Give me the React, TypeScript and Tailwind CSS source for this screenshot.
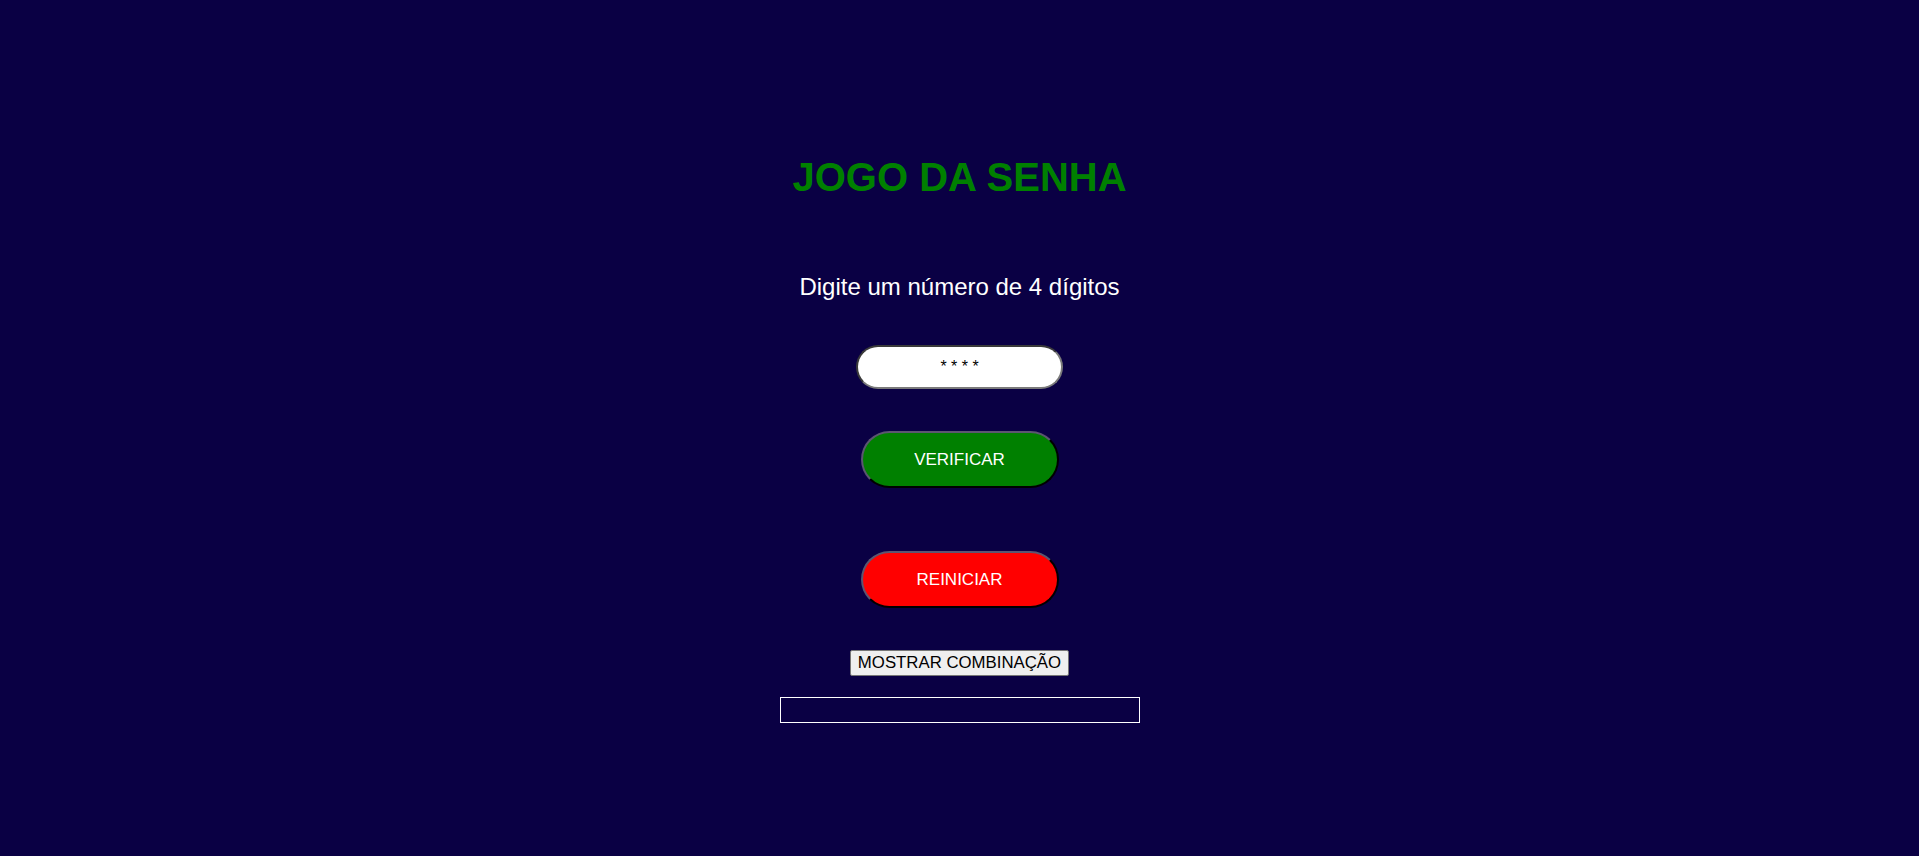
import { useState } from 'react';

export default function App() {
  const [mostrar, setMostrar] = useState(false);

  return (
    <main className="min-h-screen w-full bg-[#0a0044] flex flex-col items-center pt-[154px] font-['Liberation_Sans',Arial,sans-serif]">
      <h1 className="text-[40px] leading-[46px] font-bold text-[#008000]">JOGO DA SENHA</h1>
      <p className="mt-[73px] text-[24px] leading-[28px] text-white">Digite um número de 4 dígitos</p>
      <input
        type="text"
        maxLength={4}
        placeholder="* * * *"
        className="mt-[44px] w-[207px] h-[44px] rounded-full bg-white text-center text-[16px] text-black placeholder:text-black border-2 border-t-[#3a3a3a] border-l-[#3a3a3a] border-r-[#7a7a7a] border-b-[#7a7a7a] outline-none"
      />
      <button className="mt-[42px] w-[198px] h-[57px] rounded-full bg-[#008000] text-white text-[17px] border-2 border-t-[#5b5670] border-l-[#5b5670] border-r-black border-b-black">
        VERIFICAR
      </button>
      <button className="mt-[63px] w-[198px] h-[57px] rounded-full bg-[#ff0000] text-white text-[17px] border-2 border-t-[#5b5670] border-l-[#5b5670] border-r-black border-b-black">
        REINICIAR
      </button>
      <button
        onClick={() => setMostrar(!mostrar)}
        className="mt-[42px] h-[26px] px-[7px] rounded-[2px] bg-[#efefef] text-black text-[16.8px] leading-none border border-[#767676]"
      >
        MOSTRAR COMBINAÇÃO
      </button>
      <div className="mt-[21px] w-[360px] h-[26px] border border-white text-white text-[17px] text-center">
        {mostrar ? '' : ''}
      </div>
    </main>
  );
}
